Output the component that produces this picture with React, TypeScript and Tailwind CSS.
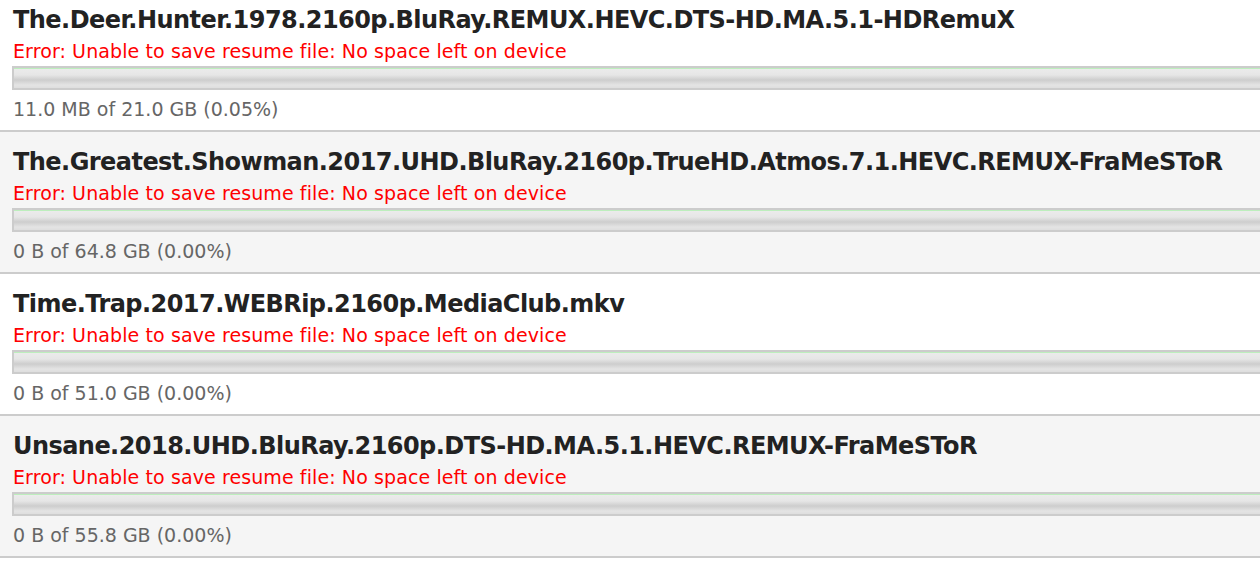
import React from "react";

const items = [
  { name: "The.Deer.Hunter.1978.2160p.BluRay.REMUX.HEVC.DTS-HD.MA.5.1-HDRemuX", stats: "11.0 MB of 21.0 GB (0.05%)" },
  { name: "The.Greatest.Showman.2017.UHD.BluRay.2160p.TrueHD.Atmos.7.1.HEVC.REMUX-FraMeSToR", stats: "0 B of 64.8 GB (0.00%)" },
  { name: "Time.Trap.2017.WEBRip.2160p.MediaClub.mkv", stats: "0 B of 51.0 GB (0.00%)" },
  { name: "Unsane.2018.UHD.BluRay.2160p.DTS-HD.MA.5.1.HEVC.REMUX-FraMeSToR", stats: "0 B of 55.8 GB (0.00%)" },
];

export default function App() {
  return (
    <div className="h-[584px] w-[1260px] overflow-hidden bg-white" style={{ fontFamily: '"DejaVu Sans", sans-serif' }}>
      <div className="-mt-[10px] flex flex-col">
        {items.map((it, i) => (
          <div
            key={i}
            className={`flex h-[142px] flex-col border-b-2 border-[#cccccc] pl-[12px] pt-[15px] ${i % 2 === 1 ? "bg-[#f5f5f5]" : "bg-white"}`}
          >
            <div className="h-[30px] whitespace-nowrap pl-[1px] text-[24px] font-bold leading-[30px] tracking-[-0.55px] text-[#222222]">
              {it.name}
            </div>
            <div className="mt-[4px] h-[24px] whitespace-nowrap pl-[1px] text-[19px] leading-[24px] tracking-[0.1px] text-[#ff0000]">
              Error: Unable to save resume file: No space left on device
            </div>
            <div className="-mr-[20px] mt-[3px] h-[24px] border-2 border-[#cccccc] bg-[linear-gradient(to_bottom,#bdeebd_0px,#bdeebd_1px,#ebebeb_1px,#e6e6e6_35%,#cdcdcd_60%,#e4e4e4_85%,#dedede_100%)]" />
            <div className="mt-[7px] h-[24px] whitespace-nowrap pl-[1px] text-[19px] leading-[24px] text-[#666666]">
              {it.stats}
            </div>
          </div>
        ))}
      </div>
    </div>
  );
}
